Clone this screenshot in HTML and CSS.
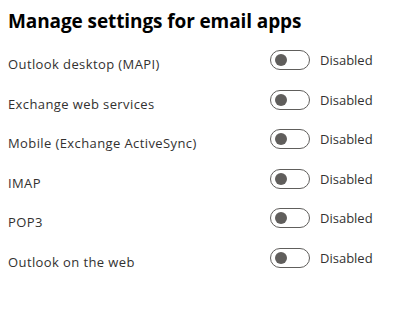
FILE: index.html
```html
<!DOCTYPE html>
<html lang="en">
<head>
  <meta charset="UTF-8">
  <title>Manage settings for email apps</title>
  <meta name="viewport" content="width=device-width, initial-scale=1">
  <link rel="stylesheet" href="styles.css">
</head>
<body>
  <div class="panel">
    <h2 class="panel-title">Manage settings for email apps</h2>
    <div class="settings">
      <div class="setting-row">
        <span class="setting-label">Outlook desktop (MAPI)</span>
        <span class="toggle"><span class="toggle-knob"></span></span>
        <span class="toggle-state">Disabled</span>
      </div>
      <div class="setting-row">
        <span class="setting-label">Exchange web services</span>
        <span class="toggle"><span class="toggle-knob"></span></span>
        <span class="toggle-state">Disabled</span>
      </div>
      <div class="setting-row">
        <span class="setting-label">Mobile (Exchange ActiveSync)</span>
        <span class="toggle"><span class="toggle-knob"></span></span>
        <span class="toggle-state">Disabled</span>
      </div>
      <div class="setting-row">
        <span class="setting-label">IMAP</span>
        <span class="toggle"><span class="toggle-knob"></span></span>
        <span class="toggle-state">Disabled</span>
      </div>
      <div class="setting-row">
        <span class="setting-label">POP3</span>
        <span class="toggle"><span class="toggle-knob"></span></span>
        <span class="toggle-state">Disabled</span>
      </div>
      <div class="setting-row">
        <span class="setting-label">Outlook on the web</span>
        <span class="toggle"><span class="toggle-knob"></span></span>
        <span class="toggle-state">Disabled</span>
      </div>
    </div>
  </div>
</body>
</html>
```

FILE: styles.css
```css
html, body {
  margin: 0;
  padding: 0;
  background: #fff;
}
body {
  font-family: "Open Sans", "Noto Sans", Arial, sans-serif;
  color: #323130;
}
.panel {
  padding: 7px 8px 0 8px;
}
.panel-title {
  margin: 0;
  font-size: 19px;
  line-height: 28px;
  font-weight: 700;
  letter-spacing: -0.1px;
  color: #000;
}
.settings {
  margin-top: 15px;
  display: flex;
  flex-direction: column;
  gap: 19.6px;
}
.setting-row {
  display: flex;
  align-items: flex-start;
  height: 20px;
}
.setting-label {
  width: 262px;
  flex-shrink: 0;
  font-size: 13px;
  line-height: 20px;
  letter-spacing: 0.4px;
  padding-top: 4px;
}
.toggle {
  box-sizing: border-box;
  width: 40px;
  height: 20px;
  border: 1px solid #605e5c;
  border-radius: 10px;
  display: flex;
  align-items: center;
  padding-left: 4px;
  flex-shrink: 0;
}
.toggle-knob {
  width: 12px;
  height: 12px;
  border-radius: 50%;
  background: #605e5c;
}
.toggle-state {
  margin-left: 10px;
  font-size: 13px;
  line-height: 20px;
}
```
